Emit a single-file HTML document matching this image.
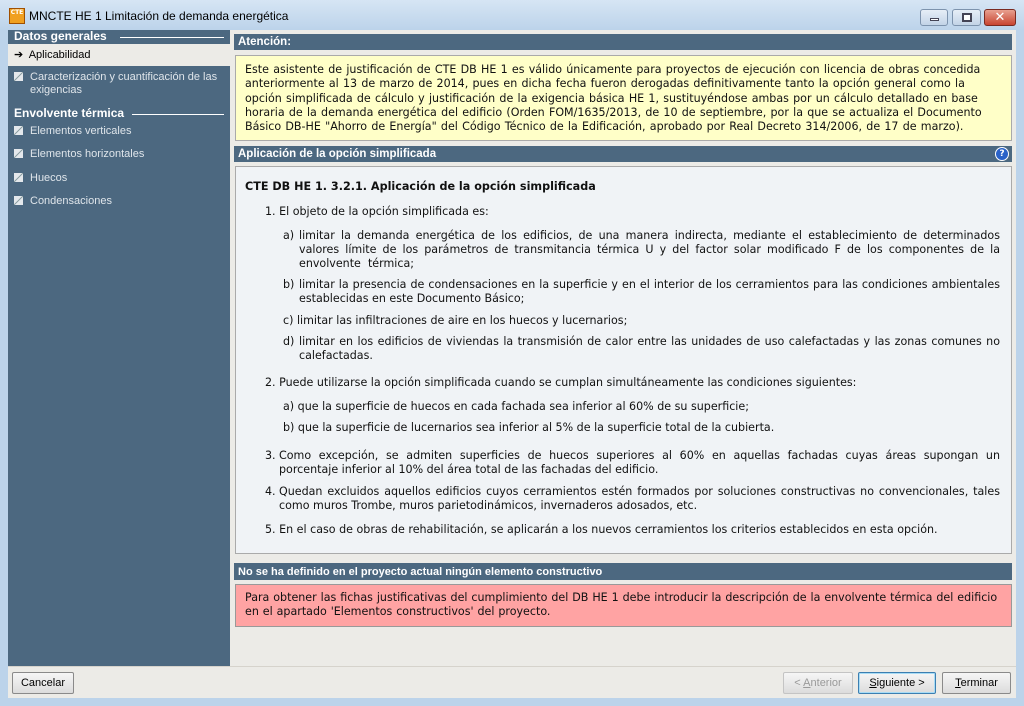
<!DOCTYPE html>
<html><head><meta charset="utf-8"><style>
*{margin:0;padding:0;box-sizing:border-box}
body{width:1024px;height:706px;overflow:hidden;background:#bcd3ea;font-family:"DejaVu Sans","Liberation Sans",sans-serif;position:relative}
.abs{position:absolute}
.tb{left:0;top:0;width:1024px;height:30px;background:linear-gradient(#d6e5f4,#bcd3ea)}
.side{left:8px;top:30px;width:222px;height:636px;background:#4c6880}
.main{left:230px;top:30px;width:786px;height:636px;background:#ecebe7}
.bot{left:8px;top:666px;width:1008px;height:32px;background:#ecebe7;border-top:1px solid #d6d3cc}
.hdr{background:#4c6880;color:#fff;font-weight:bold;font-size:11.5px;padding-left:4px;line-height:17px;font-family:"Liberation Sans",sans-serif}
.l{position:absolute;font-size:11.1px;line-height:14px;color:#111;white-space:nowrap}
.j{text-align:justify;text-align-last:justify;white-space:normal;height:14px;overflow:visible}
.y{word-spacing:0.7px}
.side .it{position:absolute;left:6px;color:#dfe5ea;font-size:11px;font-family:"Liberation Sans",sans-serif}
.side .sec{position:absolute;left:6px;color:#fff;font-weight:bold;font-size:12px;font-family:"Liberation Sans",sans-serif}
.ico{display:inline-block;width:9px;height:9px;background:linear-gradient(135deg,#fff 0 45%,#9aa 45% 55%,#fff 55%);margin-right:7px;vertical-align:-1px;opacity:.85}
.btn{position:absolute;height:22px;border:1px solid #8a8a8a;border-radius:2px;background:linear-gradient(#f6f6f6,#dcdcdc);font-family:"Liberation Sans",sans-serif;font-size:11px;text-align:center;line-height:20px;color:#000}
</style></head><body>
<div class="abs tb"></div>
<div class="abs" style="left:9px;top:8px;width:16px;height:16px;background:#f0a020;border:1px solid #a05000;font-size:6px;font-weight:bold;color:#fff;text-align:center;line-height:8px">CTE</div>
<div class="abs" style="left:29px;top:9px;font-family:'Liberation Sans',sans-serif;font-size:12px;color:#000">MNCTE HE 1 Limitación de demanda energética</div>
<div class="abs" style="left:920px;top:9px;width:28px;height:17px;border:1px solid #7d93ad;border-radius:3px;background:linear-gradient(#e6eef7,#c3d4e7)"><div style="margin:8px auto 0;width:9px;height:3px;background:#fff;border:1px solid #445"></div></div>
<div class="abs" style="left:952px;top:9px;width:29px;height:17px;border:1px solid #7d93ad;border-radius:3px;background:linear-gradient(#e6eef7,#c3d4e7)"><div style="margin:3px auto 0;width:10px;height:9px;background:#fff;border:2px solid #445"></div></div>
<div class="abs" style="left:984px;top:9px;width:32px;height:17px;border:1px solid #7a2a20;border-radius:3px;background:linear-gradient(#e8a090,#c84430);color:#fff;font-weight:bold;font-size:13px;text-align:center;line-height:16px">✕</div>

<div class="abs side">
 <div class="sec" style="top:-1px">Datos generales</div>
 <div class="abs" style="left:112px;top:7px;width:104px;height:1px;background:#fff"></div>
 <div class="abs" style="left:0;top:14px;width:222px;height:22px;background:#ecebe7"></div>
 <div class="it" style="top:18px;color:#000">➔&nbsp; Aplicabilidad</div>
 <div class="it" style="top:41px;line-height:13px"><span class="ico"></span>Caracterización y cuantificación de las<br><span style="padding-left:16px">exigencias</span></div>
 <div class="sec" style="top:76px">Envolvente térmica</div>
 <div class="abs" style="left:124px;top:84px;width:92px;height:1px;background:#fff"></div>
 <div class="it" style="top:95px"><span class="ico"></span>Elementos verticales</div>
 <div class="it" style="top:118px"><span class="ico"></span>Elementos horizontales</div>
 <div class="it" style="top:142px"><span class="ico"></span>Huecos</div>
 <div class="it" style="top:165px"><span class="ico"></span>Condensaciones</div>
</div>

<div class="abs main"></div>
<div class="abs hdr" style="left:234px;top:34px;width:778px;height:16px;line-height:17px">Atención:</div>
<div class="abs" style="left:235px;top:55px;width:777px;height:86px;background:#ffffc8;border:1px solid #aaa"></div>
<div class="l y" style="left:245px;top:63px">Este asistente de justificación de CTE DB HE 1 es válido únicamente para proyectos de ejecución con licencia de obras concedida</div>
<div class="l y" style="left:245px;top:77px">anteriormente al 13 de marzo de 2014, pues en dicha fecha fueron derogadas definitivamente tanto la opción general como la</div>
<div class="l y" style="left:245px;top:92px">opción simplificada de cálculo y justificación de la exigencia básica HE 1, sustituyéndose ambas por un cálculo detallado en base</div>
<div class="l y" style="left:245px;top:106px">horaria de la demanda energética del edificio (Orden FOM/1635/2013, de 10 de septiembre, por la que se actualiza el Documento</div>
<div class="l y" style="left:245px;top:120px">Básico DB-HE "Ahorro de Energía" del Código Técnico de la Edificación, aprobado por Real Decreto 314/2006, de 17 de marzo).</div>

<div class="abs hdr" style="left:234px;top:146px;width:778px;height:16px;line-height:17px">Aplicación de la opción simplificada</div>
<div class="abs" style="left:995px;top:147px;width:14px;height:14px;border-radius:50%;background:#2a62c8;border:1px solid #fff;color:#fff;font-size:9px;font-weight:bold;text-align:center;line-height:12px">?</div>
<div class="abs" style="left:235px;top:166px;width:777px;height:388px;background:#f0f3f6;border:1px solid #aaa"></div>
<div class="l" style="left:245px;top:180px;font-weight:bold;font-size:11.2px">CTE DB HE 1. 3.2.1. Aplicación de la opción simplificada</div>
<div class="l" style="left:265px;top:205px">1. El objeto de la opción simplificada es:</div>
<div class="l" style="left:283px;top:229px">a)</div>
<div class="l j" style="left:299px;top:229px;width:701px">limitar la demanda energética de los edificios, de una manera indirecta, mediante el establecimiento de determinados</div>
<div class="l j" style="left:299px;top:243px;width:701px">valores límite de los parámetros de transmitancia térmica U y del factor solar modificado F de los componentes de la</div>
<div class="l" style="left:299px;top:257px">envolvente&nbsp; térmica;</div>
<div class="l" style="left:283px;top:278px">b)</div>
<div class="l j" style="left:299px;top:278px;width:701px">limitar la presencia de condensaciones en la superficie y en el interior de los cerramientos para las condiciones ambientales</div>
<div class="l" style="left:299px;top:292px">establecidas en este Documento Básico;</div>
<div class="l" style="left:283px;top:314px">c) limitar las infiltraciones de aire en los huecos y lucernarios;</div>
<div class="l" style="left:283px;top:335px">d)</div>
<div class="l j" style="left:299px;top:335px;width:701px">limitar en los edificios de viviendas la transmisión de calor entre las unidades de uso calefactadas y las zonas comunes no</div>
<div class="l" style="left:299px;top:349px">calefactadas.</div>
<div class="l" style="left:265px;top:376px">2. Puede utilizarse la opción simplificada cuando se cumplan simultáneamente las condiciones siguientes:</div>
<div class="l" style="left:283px;top:400px">a) que la superficie de huecos en cada fachada sea inferior al 60% de su superficie;</div>
<div class="l" style="left:283px;top:421px">b) que la superficie de lucernarios sea inferior al 5% de la superficie total de la cubierta.</div>
<div class="l" style="left:265px;top:449px">3.</div>
<div class="l j" style="left:279px;top:449px;width:721px">Como excepción, se admiten superficies de huecos superiores al 60% en aquellas fachadas cuyas áreas supongan un</div>
<div class="l" style="left:279px;top:463px">porcentaje inferior al 10% del área total de las fachadas del edificio.</div>
<div class="l" style="left:265px;top:485px">4.</div>
<div class="l j" style="left:279px;top:485px;width:721px">Quedan excluidos aquellos edificios cuyos cerramientos estén formados por soluciones constructivas no convencionales, tales</div>
<div class="l" style="left:279px;top:499px">como muros Trombe, muros parietodinámicos, invernaderos adosados, etc.</div>
<div class="l" style="left:265px;top:523px">5. En el caso de obras de rehabilitación, se aplicarán a los nuevos cerramientos los criterios establecidos en esta opción.</div>

<div class="abs hdr" style="left:234px;top:563px;width:778px;height:17px;font-size:11px;line-height:18px">No se ha definido en el proyecto actual ningún elemento constructivo</div>
<div class="abs" style="left:235px;top:584px;width:777px;height:43px;background:#ffa3a3;border:1px solid #999"></div>
<div class="l" style="left:245px;top:591px;word-spacing:0.4px">Para obtener las fichas justificativas del cumplimiento del DB HE 1 debe introducir la descripción de la envolvente térmica del edificio</div>
<div class="l" style="left:245px;top:605px;word-spacing:0.4px">en el apartado 'Elementos constructivos' del proyecto.</div>

<div class="abs bot"></div>
<div class="btn" style="left:12px;top:672px;width:62px">Cancelar</div>
<div class="btn" style="left:783px;top:672px;width:70px;color:#999;border-color:#c4c4c4">&lt; <u>A</u>nterior</div>
<div class="btn" style="left:858px;top:672px;width:78px;border-color:#3c7fb1;box-shadow:inset 0 0 0 1px #a8dcf5"><u>S</u>iguiente &gt;</div>
<div class="btn" style="left:942px;top:672px;width:69px"><u>T</u>erminar</div>
</body></html>
